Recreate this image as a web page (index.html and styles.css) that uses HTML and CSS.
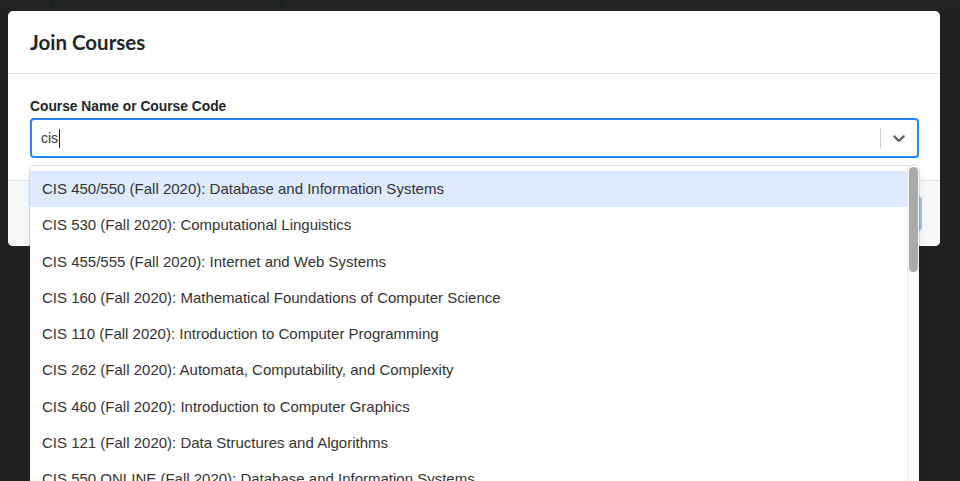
FILE: index.html
```html
<!DOCTYPE html>
<html lang="en">
<head>
<meta charset="utf-8">
<title>Join Courses</title>
<link rel="stylesheet" href="styles.css">
</head>
<body>
<div class="topstrip"><div class="ghost"></div></div>
<div class="backdrop">
  <div class="modal">
    <div class="modal-header">
      <h2 class="modal-title">Join Courses</h2>
    </div>
    <div class="modal-body">
      <label class="field-label">Course Name or Course Code</label>
      <div class="select">
        <div class="control">
          <div class="value">cis<span class="caret"></span></div>
          <div class="indicators">
            <span class="separator"></span>
            <span class="dropdown-ind">
              <svg viewBox="0 0 20 20" width="20" height="20" aria-hidden="true"><path fill="#666" d="M4.516 7.548c0.436-0.446 1.043-0.481 1.576 0l3.908 3.747 3.908-3.747c0.533-0.481 1.141-0.446 1.574 0 0.436 0.445 0.408 1.197 0 1.615-0.406 0.418-4.695 4.502-4.695 4.502-0.217 0.223-0.502 0.335-0.787 0.335s-0.57-0.112-0.789-0.335c0 0-4.287-4.084-4.695-4.502s-0.436-1.170 0-1.615z"/></svg>
            </span>
          </div>
        </div>
        <div class="menu">
          <div class="menu-list">
            <div class="option focused">CIS 450/550 (Fall 2020): Database and Information Systems</div>
            <div class="option">CIS 530 (Fall 2020): Computational Linguistics</div>
            <div class="option">CIS 455/555 (Fall 2020): Internet and Web Systems</div>
            <div class="option">CIS 160 (Fall 2020): Mathematical Foundations of Computer Science</div>
            <div class="option">CIS 110 (Fall 2020): Introduction to Computer Programming</div>
            <div class="option">CIS 262 (Fall 2020): Automata, Computability, and Complexity</div>
            <div class="option">CIS 460 (Fall 2020): Introduction to Computer Graphics</div>
            <div class="option">CIS 121 (Fall 2020): Data Structures and Algorithms</div>
            <div class="option">CIS 550 ONLINE (Fall 2020): Database and Information Systems</div>
          </div>
          <div class="scroll-track"><div class="scroll-thumb"></div></div>
        </div>
      </div>
    </div>
    <div class="modal-footer">
      <button class="btn-primary" disabled>Join</button>
    </div>
  </div>
</div>
</body>
</html>
```
FILE: styles.css
```css
* { box-sizing: border-box; }
html, body { margin: 0; padding: 0; }
body {
  background: #212121;
  width: 960px;
  height: 481px;
  overflow: hidden;
  font-family: Lato, "Liberation Sans", sans-serif;
  color: #212529;
}
.topstrip {
  height: 11px;
  background: #232323;
  padding-left: 52px;
}
.ghost {
  width: 231px;
  height: 10px;
  border-left: 2px solid #0f2a10;
  border-right: 2px solid #0f2a10;
  border-bottom: 1px dashed #123012;
}
.backdrop {
  padding: 0 20px 0 8px;
}
.modal {
  width: 932px;
  background: #fff;
  border-radius: 5px;
}
.modal-header {
  padding: 16px 22px;
  border-bottom: 1px solid #dee2e6;
}
.modal-title {
  margin: 0;
  font-size: 20.5px;
  line-height: 30px;
  font-weight: 700;
  color: #212529;
}
.modal-body {
  padding: 23px 21px 22px 22px;
}
.field-label {
  display: block;
  font-family: "Liberation Sans", Arial, sans-serif;
  font-size: 13.8px;
  font-weight: 700;
  line-height: 20px;
  margin-bottom: 1px;
  color: #212529;
}
.select {
  position: relative;
}
.control {
  height: 40px;
  border: 2px solid #2684ff;
  border-radius: 4px;
  display: flex;
  align-items: center;
}
.value {
  flex: 1;
  padding-left: 9px;
  font-family: "Liberation Sans", Arial, sans-serif;
  font-size: 14px;
  line-height: 20px;
  color: #333;
  display: flex;
  align-items: center;
}
.caret {
  display: inline-block;
  width: 1px;
  height: 19px;
  background: #222;
  margin-left: 1px;
}
.indicators {
  display: flex;
  align-items: center;
  height: 100%;
}
.separator {
  width: 1px;
  height: 20px;
  background: #ccc;
}
.dropdown-ind {
  padding: 8px;
  display: flex;
  color: #666;
}
.dropdown-ind svg { display: block; }
.menu {
  position: absolute;
  top: 48px;
  left: 0;
  right: 0;
  height: 330px;
  background: #fff;
  border-radius: 4px;
  box-shadow: 0 0 0 1px rgba(0,0,0,0.1), 0 4px 11px rgba(0,0,0,0.1);
  overflow: hidden;
  z-index: 10;
}
.menu-list {
  padding-top: 5px;
  padding-right: 12px;
  font-family: "Liberation Sans", Arial, sans-serif;
  font-size: 15px;
  color: #333;
}
.option {
  padding: 8px 12px;
  line-height: 20.25px;
  white-space: nowrap;
}
.option.focused {
  background: #deebff;
}
.scroll-track {
  position: absolute;
  top: 0;
  right: 0;
  width: 12px;
  height: 100%;
  background: #fafafa;
  border-left: 1px solid #ececec;
}
.scroll-thumb {
  margin: 1px 1px 0 1px;
  height: 105px;
  background: #a9a9a9;
  border-radius: 5px;
}
.modal-footer {
  border-top: 1px solid #dee2e6;
  background: #f8f9fa;
  height: 66px;
  padding: 15px 18px 15px 22px;
  display: flex;
  justify-content: flex-end;
  border-radius: 0 0 5px 5px;
}
.btn-primary {
  width: 90px;
  height: 35px;
  border: none;
  border-radius: 4px;
  background: #9cc4ee;
  color: #fff;
  font-size: 15px;
  font-family: Lato, sans-serif;
}
```
